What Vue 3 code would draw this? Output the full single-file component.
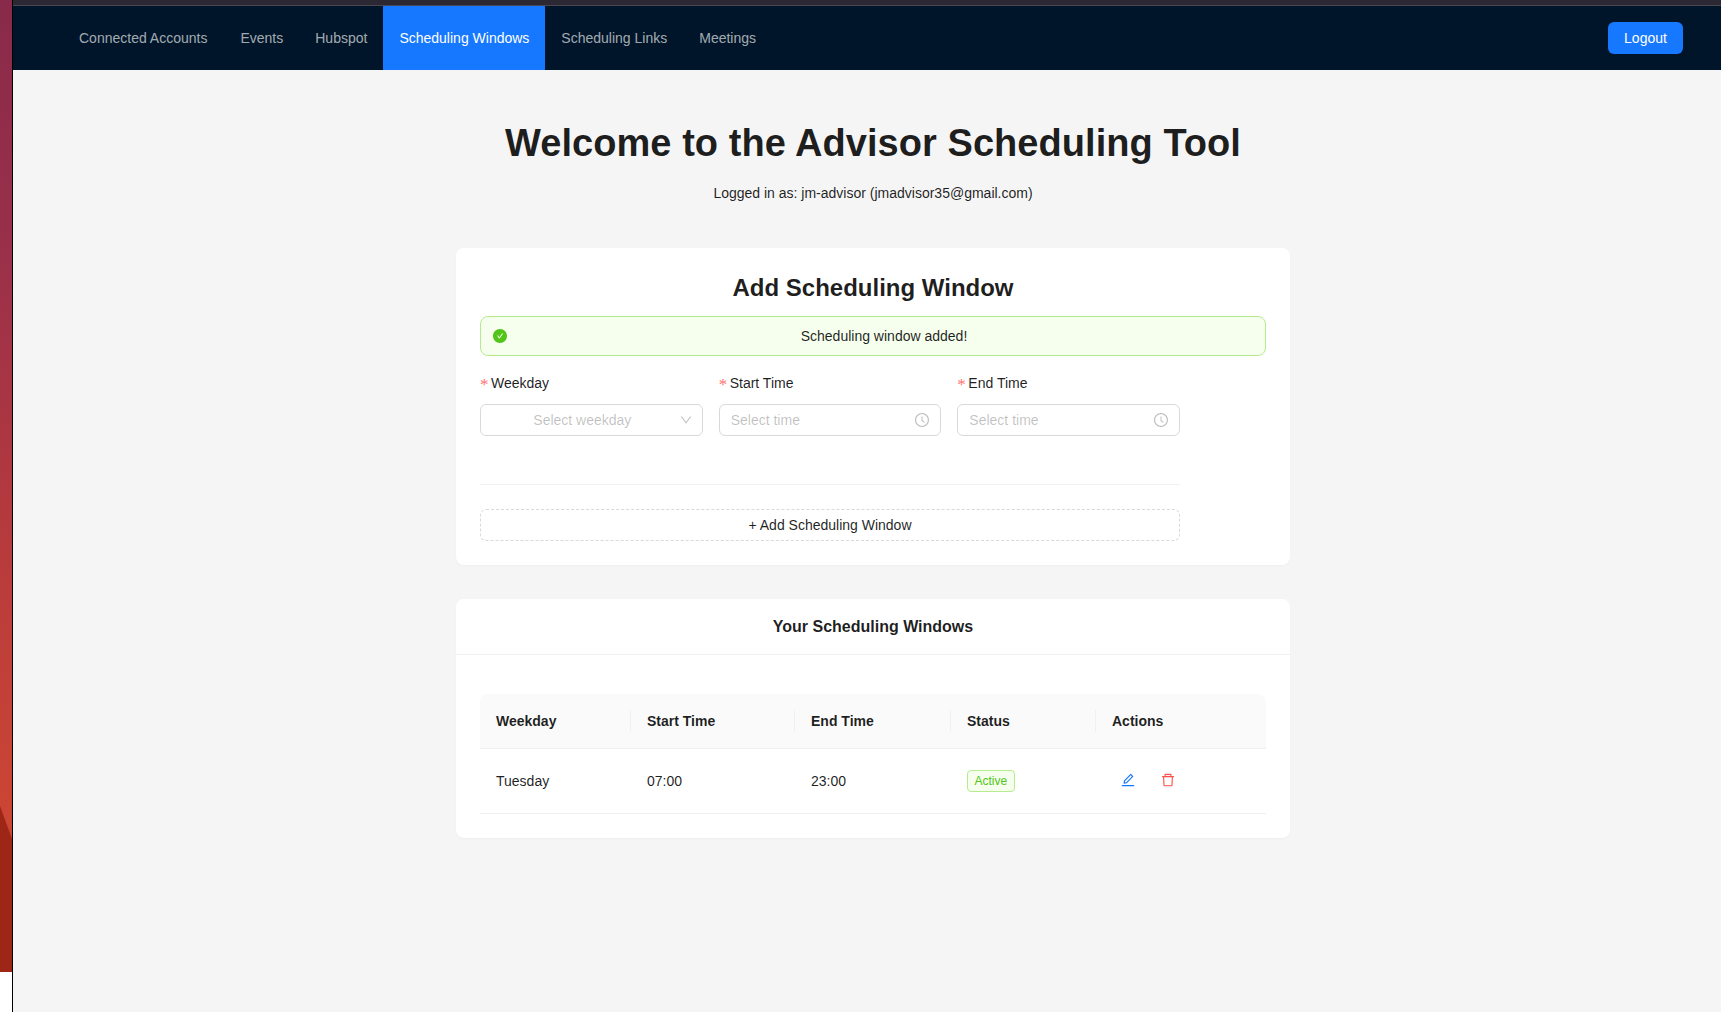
<script setup>
import { ref } from 'vue'

const navItems = ['Connected Accounts', 'Events', 'Hubspot', 'Scheduling Windows', 'Scheduling Links', 'Meetings']
const activeNav = ref('Scheduling Windows')

const windows = ref([
  { id: 1, weekday: 'Tuesday', start: '07:00', end: '23:00', status: 'Active' }
])

const columns = ['Weekday', 'Start Time', 'End Time', 'Status', 'Actions']
</script>

<template>
  <div class="desktop">
    <div class="wallpaper">
      <div class="wallpaper-shade"></div>
      <div class="wallpaper-gap"></div>
    </div>

    <div class="window">
      <div class="titlebar"></div>

      <header class="app-header">
        <nav class="nav">
          <a
            v-for="item in navItems"
            :key="item"
            :class="['nav-item', { active: item === activeNav }]"
          >{{ item }}</a>
        </nav>
        <button class="logout-btn">Logout</button>
      </header>

      <main class="content">
        <h1 class="page-title">Welcome to the Advisor Scheduling Tool</h1>
        <p class="logged-in">Logged in as: jm-advisor (jmadvisor35@gmail.com)</p>

        <section class="card add-card">
          <h2 class="add-title">Add Scheduling Window</h2>

          <div class="alert">
            <svg class="alert-icon" viewBox="64 64 896 896" fill="currentColor">
              <path d="M512 64C264.6 64 64 264.6 64 512s200.6 448 448 448 448-200.6 448-448S759.4 64 512 64zm193.5 301.7l-210.6 292a31.8 31.8 0 0 1-51.7 0L318.5 484.9c-3.8-5.3 0-12.7 6.5-12.7h46.9c10.2 0 19.9 4.9 25.9 13.3l71.2 98.8 157.2-218c6-8.3 15.6-13.3 25.9-13.3H699c6.5 0 10.3 7.4 6.5 12.7z" />
            </svg>
            <span class="alert-text">Scheduling window added!</span>
          </div>

          <form class="window-form" @submit.prevent>
            <div class="form-row">
              <div class="field">
                <label class="field-label"><span class="req">*</span>Weekday</label>
                <div class="control select">
                  <span class="select-placeholder">Select weekday</span>
                  <svg class="control-icon chevron" viewBox="64 64 896 896" fill="currentColor">
                    <path d="M884 256h-75c-5.1 0-9.9 2.5-12.9 6.6L512 654.2 227.9 262.6c-3-4.1-7.8-6.6-12.9-6.6h-75c-6.5 0-10.3 7.4-6.5 12.7l352.6 486.1c12.8 17.6 39 17.6 51.7 0l352.6-486.1c3.9-5.3.1-12.7-6.4-12.7z" />
                  </svg>
                </div>
              </div>

              <div v-for="label in ['Start Time', 'End Time']" :key="label" class="field">
                <label class="field-label"><span class="req">*</span>{{ label }}</label>
                <div class="control">
                  <input class="time-input" placeholder="Select time" readonly />
                  <svg class="control-icon" viewBox="64 64 896 896" fill="currentColor">
                    <path d="M512 64C264.6 64 64 264.6 64 512s200.6 448 448 448 448-200.6 448-448S759.4 64 512 64zm0 820c-205.4 0-372-166.6-372-372s166.6-372 372-372 372 166.6 372 372-166.6 372-372 372z" />
                    <path d="M686.7 638.6L544.1 535.5V288c0-4.4-3.6-8-8-8H488c-4.4 0-8 3.6-8 8v275.4c0 2.6 1.2 5 3.3 6.5l165.4 120.6c3.6 2.6 8.6 1.8 11.2-1.7l28.6-39c2.6-3.7 1.8-8.7-1.8-11.2z" />
                  </svg>
                </div>
              </div>
            </div>

            <div class="form-divider"></div>

            <button type="button" class="dashed-btn">+ Add Scheduling Window</button>
          </form>
        </section>

        <section class="card list-card">
          <div class="list-head">Your Scheduling Windows</div>
          <div class="list-body">
            <table class="table">
              <colgroup>
                <col style="width: 151px" />
                <col style="width: 164px" />
                <col style="width: 156px" />
                <col style="width: 145px" />
                <col />
              </colgroup>
              <thead>
                <tr>
                  <th v-for="col in columns" :key="col">{{ col }}</th>
                </tr>
              </thead>
              <tbody>
                <tr v-for="row in windows" :key="row.id">
                  <td>{{ row.weekday }}</td>
                  <td>{{ row.start }}</td>
                  <td>{{ row.end }}</td>
                  <td><span class="tag">{{ row.status }}</span></td>
                  <td>
                    <div class="actions">
                      <svg class="action-icon edit" viewBox="64 64 896 896" fill="currentColor">
                        <path d="M257.7 752c2 0 4-.2 6-.5L431.9 722c2-.4 3.9-1.3 5.3-2.8l423.9-423.9a9.96 9.96 0 0 0 0-14.1L694.9 114.9c-1.9-1.9-4.4-2.9-7.1-2.9s-5.2 1-7.1 2.9L256.8 538.8c-1.5 1.5-2.4 3.3-2.8 5.3l-29.5 168.2a33.5 33.5 0 0 0 9.4 29.8c6.6 6.4 14.9 9.9 23.8 9.9zm67.4-174.4L687.8 215l73.3 73.3-362.7 362.6-88.9 15.7 15.6-89zM880 836H144c-17.7 0-32 14.3-32 32v36c0 4.4 3.6 8 8 8h784c4.4 0 8-3.6 8-8v-36c0-17.7-14.3-32-32-32z" />
                      </svg>
                      <svg class="action-icon del" viewBox="64 64 896 896" fill="currentColor">
                        <path d="M360 184h-8c4.4 0 8-3.6 8-8v8h304v-8c0 4.4 3.6 8 8 8h-8v72h72v-80c0-35.3-28.7-64-64-64H352c-35.3 0-64 28.7-64 64v80h72v-72zm504 72H160c-17.7 0-32 14.3-32 32v32c0 4.4 3.6 8 8 8h60.4l24.7 523c1.6 34.1 29.8 61 63.9 61h454c34.2 0 62.3-26.8 63.9-61l24.7-523H888c4.4 0 8-3.6 8-8v-32c0-17.7-14.3-32-32-32zM731.3 840H292.7l-24.2-512h487l-24.2 512z" />
                      </svg>
                    </div>
                  </td>
                </tr>
              </tbody>
            </table>
          </div>
        </section>
      </main>
    </div>
  </div>
</template>

<style>
html, body {
  margin: 0;
  overflow: hidden;
}
</style>

<style scoped>
.desktop {
  display: flex;
  width: 100vw;
  height: 100vh;
  overflow: hidden;
  font-family: "Liberation Sans", Arial, sans-serif;
  font-size: 14px;
  color: rgba(0, 0, 0, 0.88);
  background: #f5f5f5;
}

.wallpaper {
  position: relative;
  flex: 0 0 12px;
  background: linear-gradient(180deg, #892a4a 0%, #9a304a 25%, #b83b3c 55%, #cb4534 80%);
}

.wallpaper-shade {
  position: absolute;
  left: 0;
  right: 0;
  top: 806px;
  height: 166px;
  background: #9e2616;
  clip-path: polygon(0 0, 100% 33px, 100% 100%, 0 100%);
}

.wallpaper-gap {
  position: absolute;
  left: 0;
  right: 0;
  top: 972px;
  bottom: 0;
  background: #fff;
}

.window {
  flex: 0 0 1721px;
  min-height: 100%;
  border-left: 1px solid #000;
  box-sizing: border-box;
}

.titlebar {
  height: 5px;
  background: #2b2833;
  border-bottom: 1px solid #4a4852;
}

.app-header {
  display: flex;
  align-items: center;
  justify-content: space-between;
  height: 64px;
  padding: 0 50px;
  background: #001529;
}

.nav {
  display: flex;
  height: 100%;
}

.nav-item {
  display: flex;
  align-items: center;
  padding: 0 16px;
  color: rgba(255, 255, 255, 0.65);
}

.nav-item:first-child {
  padding-right: 17px;
}

.nav-item.active {
  background: #1677ff;
  color: #fff;
}

.logout-btn {
  width: 75px;
  height: 32px;
  padding: 0;
  border: none;
  border-radius: 6px;
  background: #1677ff;
  color: #fff;
  font: inherit;
}

.content {
  display: flex;
  flex-direction: column;
  align-items: center;
}

.page-title {
  margin: 50px 0 0;
  font-size: 38px;
  line-height: 46px;
  font-weight: 700;
  letter-spacing: 0.05px;
}

.logged-in {
  margin: 16px 0 0;
  line-height: 22px;
}

.card {
  width: 834px;
  box-sizing: border-box;
  background: #fff;
  border-radius: 8px;
  box-shadow: 0 1px 2px rgba(0, 0, 0, 0.03);
}

.add-card {
  margin-top: 44px;
  padding: 24px;
}

.add-title {
  margin: 0;
  font-size: 24px;
  line-height: 32px;
  font-weight: 700;
  text-align: center;
}

.alert {
  display: flex;
  align-items: center;
  height: 40px;
  margin-top: 12px;
  padding: 0 12px;
  box-sizing: border-box;
  border: 1px solid #b7eb8f;
  border-radius: 8px;
  background: #f6ffed;
}

.alert-icon {
  width: 14px;
  height: 14px;
  margin-right: 8px;
  color: #52c41a;
}

.alert-text {
  flex: 1;
  text-align: center;
}

.window-form {
  width: 700px;
  margin-top: 16px;
}

.form-row {
  display: flex;
  gap: 16px;
}

.field {
  flex: 1;
  min-width: 0;
}

.field-label {
  display: block;
  height: 22px;
  line-height: 22px;
  margin-bottom: 10px;
}

.req {
  display: inline-block;
  width: 7px;
  margin-right: 4px;
  color: #ff4d4f;
  font-family: "Liberation Serif", serif;
  font-size: 17px;
  line-height: 14px;
  vertical-align: -2px;
  opacity: 0.8;
}

.control {
  display: flex;
  align-items: center;
  height: 32px;
  padding: 0 11px;
  box-sizing: border-box;
  border: 1px solid #d9d9d9;
  border-radius: 6px;
  background: #fff;
}

.select-placeholder {
  flex: 1;
  text-align: center;
  color: rgba(0, 0, 0, 0.25);
  padding-right: 7px;
}

.time-input {
  flex: 1;
  min-width: 0;
  padding: 0;
  border: none;
  outline: none;
  background: transparent;
  font: inherit;
}

.time-input::placeholder {
  color: rgba(0, 0, 0, 0.25);
}

.control-icon {
  flex: none;
  width: 14px;
  height: 14px;
  color: rgba(0, 0, 0, 0.25);
}

.chevron {
  width: 12px;
  height: 12px;
  margin-right: -1px;
}

.form-divider {
  height: 1px;
  margin-top: 48px;
  background: rgba(5, 5, 5, 0.06);
}

.dashed-btn {
  display: block;
  width: 100%;
  height: 32px;
  margin-top: 24px;
  padding: 0;
  border: 1px dashed #d9d9d9;
  border-radius: 6px;
  background: #fff;
  color: rgba(0, 0, 0, 0.88);
  font: inherit;
}

.list-card {
  margin-top: 34px;
}

.list-head {
  height: 56px;
  box-sizing: border-box;
  line-height: 55px;
  text-align: center;
  font-size: 16px;
  font-weight: 700;
  border-bottom: 1px solid #f0f0f0;
}

.list-body {
  padding: 39px 24px 24px;
}

.table {
  width: 100%;
  table-layout: fixed;
  border-collapse: separate;
  border-spacing: 0;
}

.table th {
  position: relative;
  height: 55px;
  padding: 0 16px;
  box-sizing: border-box;
  text-align: left;
  font-weight: 700;
  background: #fafafa;
  border-bottom: 1px solid #f0f0f0;
}

.table th:first-child {
  border-top-left-radius: 8px;
}

.table th:last-child {
  border-top-right-radius: 8px;
}

.table th:not(:last-child)::before {
  content: "";
  position: absolute;
  top: 16px;
  right: 0;
  width: 1px;
  height: 22px;
  background: #f0f0f0;
}

.table td {
  height: 65px;
  padding: 0 16px;
  box-sizing: border-box;
  border-bottom: 1px solid #f0f0f0;
}

.tag {
  display: inline-block;
  height: 22px;
  line-height: 20px;
  padding: 0 6.5px;
  box-sizing: border-box;
  font-size: 12px;
  color: #52c41a;
  background: #f6ffed;
  border: 1px solid #b7eb8f;
  border-radius: 4px;
}

.actions {
  display: flex;
  align-items: center;
  gap: 26px;
  padding-left: 9px;
}

.action-icon {
  width: 14px;
  height: 14px;
  margin-top: -3px;
}

.edit {
  color: #1677ff;
}

.del {
  color: #ff4d4f;
}
</style>
